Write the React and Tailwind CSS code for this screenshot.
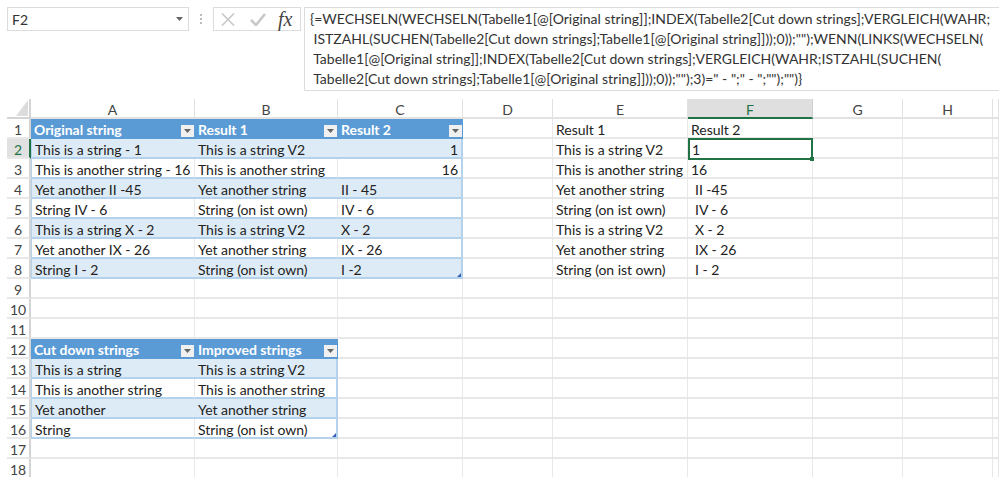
const A = ["Original string","This is a string - 1","This is another string - 16","Yet another II -45","String IV - 6","This is a string X - 2","Yet another IX - 26","String I - 2"];
const B = ["Result 1","This is a string V2","This is another string","Yet another string","String (on ist own)","This is a string V2","Yet another string","String (on ist own)"];
const C = ["Result 2","1","16","II - 45","IV - 6","X - 2","IX - 26","I -2"];
const A2 = ["Cut down strings","This is a string","This is another string","Yet another","String"];
const B2 = ["Improved strings","This is a string V2","This is another string","Yet another string","String (on ist own)"];
const E = ["Result 1","This is a string V2","This is another string","Yet another string","String (on ist own)","This is a string V2","Yet another string","String (on ist own)"];
const F = ["Result 2","1","16","II -45","IV - 6","X - 2","IX - 26","I - 2"];
const COLS = ["A","B","C","D","E","F","G","H",""];
const FORMULA = [
  '{=WECHSELN(WECHSELN(Tabelle1[@[Original string]];INDEX(Tabelle2[Cut down strings];VERGLEICH(WAHR;',
  ' ISTZAHL(SUCHEN(Tabelle2[Cut down strings];Tabelle1[@[Original string]]));0));"");WENN(LINKS(WECHSELN(',
  ' Tabelle1[@[Original string]];INDEX(Tabelle2[Cut down strings];VERGLEICH(WAHR;ISTZAHL(SUCHEN(',
  ' Tabelle2[Cut down strings];Tabelle1[@[Original string]]));0));"");3)=" - ";" - ";"");"")}',
];

function Filter() {
  return (
    <span className="absolute right-[1px] top-[6px] w-[13px] h-[12px] bg-[#f0f0f0] flex items-center justify-center">
      <svg width="7" height="4" viewBox="0 0 7 4"><path d="M0 0h7L3.5 4z" fill="#666" /></svg>
    </span>
  );
}

function Plain({ children, indent }) {
  return (
    <div className={"h-[20px] border-r border-b-2 border-[#e8e8e8] text-[#222] leading-[21px] whitespace-nowrap " + (indent ? "pl-[7px]" : "pl-[3px]")}>
      {children}
    </div>
  );
}

function TableHead({ children }) {
  return (
    <div className="relative h-[20px] bg-[#5b9bd5] text-white font-bold leading-[21px] pl-[3px] whitespace-nowrap">
      {children}
      <Filter />
    </div>
  );
}

function TableCell({ children, band, first, last, right, corner }) {
  return (
    <div className={
      "relative h-[20px] border-b-2 border-b-[#b4d2ec] text-[#222] leading-[21px] pl-[3px] pr-[3px] whitespace-nowrap " +
      (band ? "bg-[#ddebf7] " : "bg-white ") +
      (first ? "border-l border-l-[#b4d2ec] " : "") +
      (last ? "border-r-2 border-r-[#b4d2ec] " : band ? "" : "border-r border-r-[#e8e8e8] ") +
      (right ? "text-right" : "")
    }>
      {children}
      {corner && <span className="absolute right-0 bottom-0 w-0 h-0 border-l-[4px] border-l-transparent border-b-[4px] border-b-[#3a5fb5]" />}
    </div>
  );
}

function RowHead({ n, selected }) {
  return (
    <div className={
      "h-[20px] text-center leading-[21px] border-b-2 border-[#e8e8e8] " +
      (selected ? "bg-[#e1e1e1] text-[#217346] border-r-2 border-r-[#217346]" : "text-[#444] border-r-2 border-r-[#d4d4d4]")
    }>
      {n}
    </div>
  );
}

function Row({ r }) {
  let a, b, c;
  if (r === 1) {
    a = <TableHead>{A[0]}</TableHead>; b = <TableHead>{B[0]}</TableHead>; c = <TableHead>{C[0]}</TableHead>;
  } else if (r <= 8) {
    const band = r % 2 === 0;
    a = <TableCell band={band} first>{A[r - 1]}</TableCell>;
    b = <TableCell band={band}>{B[r - 1]}</TableCell>;
    c = <TableCell band={band} last right={r <= 3} corner={r === 8}>{C[r - 1]}</TableCell>;
  } else if (r === 12) {
    a = <TableHead>{A2[0]}</TableHead>; b = <TableHead>{B2[0]}</TableHead>; c = <Plain />;
  } else if (r >= 13 && r <= 16) {
    const band = r % 2 === 1;
    a = <TableCell band={band} first>{A2[r - 12]}</TableCell>;
    b = <TableCell band={band} last corner={r === 16}>{B2[r - 12]}</TableCell>;
    c = <Plain />;
  } else {
    a = <Plain />; b = <Plain />; c = <Plain />;
  }
  return (
    <>
      <RowHead n={r} selected={r === 2} />
      {a}{b}{c}
      <Plain />
      <Plain>{r <= 8 ? E[r - 1] : null}</Plain>
      {r === 2 ? (
        <div className="relative z-10 h-[22px] border-2 border-[#217346] bg-white leading-[19px] pl-[2px] text-[#222] -mt-[1px]">
          1
          <span className="absolute -right-[3px] -bottom-[3px] w-[4px] h-[4px] bg-[#217346]" />
        </div>
      ) : (
        <Plain indent={r >= 4 && r <= 8}>{r <= 8 ? F[r - 1] : null}</Plain>
      )}
      <Plain /><Plain /><Plain />
    </>
  );
}

export default function App() {
  const rows = Array.from({ length: 18 }, (_, i) => i + 1);
  return (
    <div className="w-[999px] h-[477px] overflow-hidden bg-white text-[14px] font-['Lato',sans-serif]">
      <div className="h-[99px] flex items-start pt-[7px] pl-[7px]">
        <div className="w-[182px] h-[24px] border border-[#dcdcdc] flex items-center justify-between pl-[4px] pr-[5px] text-[#333]">
          <span>F2</span>
          <svg width="7" height="4" viewBox="0 0 7 4"><path d="M0 0h7L3.5 4z" fill="#666" /></svg>
        </div>
        <div className="w-[24px] h-[24px] flex flex-col items-center justify-center gap-[2px]">
          <span className="w-[2px] h-[2px] bg-[#bbb]" />
          <span className="w-[2px] h-[2px] bg-[#bbb]" />
          <span className="w-[2px] h-[2px] bg-[#bbb]" />
        </div>
        <div className="w-[88px] h-[24px] border border-[#dcdcdc] flex items-center pl-[7px]">
          <svg width="14" height="13" viewBox="0 0 14 13" fill="none"><path d="M1 .5l12 12M13 .5l-12 12" stroke="#c8c8c8" strokeWidth="1.6" /></svg>
          <svg className="ml-[15px]" width="16" height="13" viewBox="0 0 16 13" fill="none"><path d="M1 7l5 5L15 1" stroke="#c8c8c8" strokeWidth="2.6" /></svg>
          <span className="ml-[12px] font-['Liberation_Serif',serif] italic text-[20px] leading-[20px] text-[#444]">fx</span>
        </div>
        <div className="ml-[3px] flex-1 h-[84px] border border-[#dcdcdc] border-r-0 pl-[5px] pt-[1px] text-[#333] whitespace-pre">
          {FORMULA.map((l, i) => <div key={i} className="h-[20px] leading-[20px]">{l}</div>)}
        </div>
      </div>
      <div className="pl-[7px] grid grid-cols-[24px_164px_143px_125px_90px_135px_125px_90px_90px_1fr] auto-rows-[20px] text-[14px] tracking-[-0.04px]">
        <div className="h-[20px] border-r-2 border-b-2 border-[#d4d4d4] pl-[9px] pt-[1px]">
          <svg width="12" height="16" viewBox="0 0 12 16"><path d="M12 0v16H0z" fill="#dcdcdc" /></svg>
        </div>
        {COLS.map((c) => (
          <div key={c || "I"} className={"h-[20px] text-center leading-[21px] border-r border-b-2 " + (c === "F" ? "bg-[#dfdfdf] text-[#217346] border-b-[#217346] border-r-[#d0d0d0]" : "text-[#444] border-[#e2e2e2]")}>{c}</div>
        ))}
        {rows.map((r) => <Row key={r} r={r} />)}
      </div>
    </div>
  );
}
